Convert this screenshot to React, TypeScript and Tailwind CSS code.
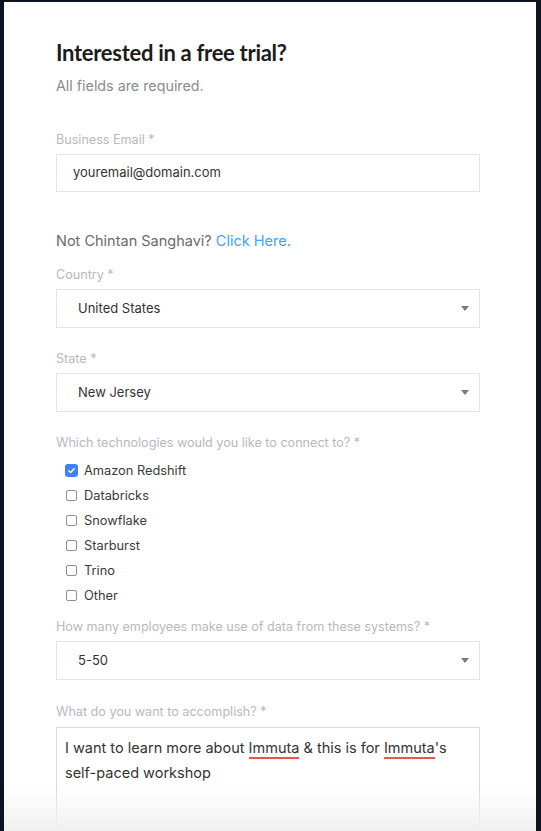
const technologies = [
  { name: "Amazon Redshift", checked: true },
  { name: "Databricks", checked: false },
  { name: "Snowflake", checked: false },
  { name: "Starburst", checked: false },
  { name: "Trino", checked: false },
  { name: "Other", checked: false },
];

function Label({ text, className = "" }: { text: string; className?: string }) {
  return <div className={`text-[12.6px] leading-[18px] text-[#b6b9c1] ${className}`}>{text}</div>;
}

function SelectBox({ value, className = "" }: { value: string; className?: string }) {
  return (
    <div
      className={`flex h-[39px] items-center justify-between border border-[#e2e4e9] bg-white pl-[21px] pr-[10px] ${className}`}
    >
      <span className="text-[13px] text-[#333]">{value}</span>
      <svg width="8" height="5" viewBox="0 0 8 5">
        <path d="M0 0h8L4 5z" fill="#7a7a7a" />
      </svg>
    </div>
  );
}

function Checkbox({ name, checked }: { name: string; checked: boolean }) {
  return (
    <div className="flex h-[25px] items-center">
      <div className="flex w-[28px] justify-center pl-[2px]">
        {checked ? (
          <span className="flex h-[13px] w-[13px] items-center justify-center rounded-[3px] bg-[#3b82f6]">
            <svg width="9" height="9" viewBox="0 0 10 10">
              <path d="M2 5.2l2 2L8 3" stroke="white" strokeWidth="1.6" fill="none" strokeLinecap="round" strokeLinejoin="round" />
            </svg>
          </span>
        ) : (
          <span className="h-[11px] w-[11px] rounded-[2px] border border-[#8f8f8f] bg-white" />
        )}
      </div>
      <span className="text-[12.8px] text-[#3a3a3a]">{name}</span>
    </div>
  );
}

function Misspelled({ children }: { children: string }) {
  return <span className="border-b-2 border-[#f05252] pb-[1px]">{children}</span>;
}

export default function App() {
  return (
    <div
      className="h-[831px] w-[541px] overflow-hidden bg-[#0e1320] pl-[4px] pr-[5px] pt-[2px]"
      style={{ fontFamily: "Inter, 'Noto Sans', sans-serif" }}
    >
      <div className="relative h-full bg-white pl-[52px] pr-[56px] pt-[37px]">
        <h1
          className="text-[22px] font-bold leading-[28px] tracking-[-0.3px] text-[#1c1c1c]"
          style={{ fontFamily: "Lato, Inter, sans-serif" }}
        >
          Interested in a free trial?
        </h1>
        <p className="mt-[9px] text-[14.3px] leading-[20px] text-[#8c8c8c]">All fields are required.</p>

        <Label text="Business Email *" className="mt-[35px]" />
        <div className="mt-[5px] flex h-[38px] items-center border border-[#e2e4e9] pl-[16px]">
          <span className="text-[13px] text-[#333]">youremail@domain.com</span>
        </div>

        <p className="mt-[38px] text-[14.5px] leading-[22px] text-[#6b6b6b]">
          Not Chintan Sanghavi? <span className="text-[#3fa3f2]">Click Here.</span>
        </p>

        <Label text="Country *" className="mt-[14px]" />
        <SelectBox value="United States" className="mt-[5px]" />

        <Label text="State *" className="mt-[22px]" />
        <SelectBox value="New Jersey" className="mt-[5px]" />

        <Label text="Which technologies would you like to connect to? *" className="mt-[22px]" />
        <div className="mt-[6px] flex flex-col">
          {technologies.map((t) => (
            <Checkbox key={t.name} name={t.name} checked={t.checked} />
          ))}
        </div>

        <Label text="How many employees make use of data from these systems? *" className="mt-[10px]" />
        <SelectBox value="5-50" className="mt-[5px]" />

        <Label text="What do you want to accomplish? *" className="mt-[23px]" />
        <div className="mt-[6px] h-[160px] border border-[#d9dbe0] px-[8px] pt-[7px] text-[14.5px] leading-[25px] text-[#333]">
          I want to learn more about <Misspelled>Immuta</Misspelled> &amp; this is for <Misspelled>Immuta</Misspelled>'s
          self-paced workshop
        </div>

        {/* fade at the bottom edge */}
        <div className="pointer-events-none absolute inset-x-0 bottom-0 h-[44px] bg-linear-to-b from-white/0 to-[#f0f0f0]" />
      </div>
    </div>
  );
}
